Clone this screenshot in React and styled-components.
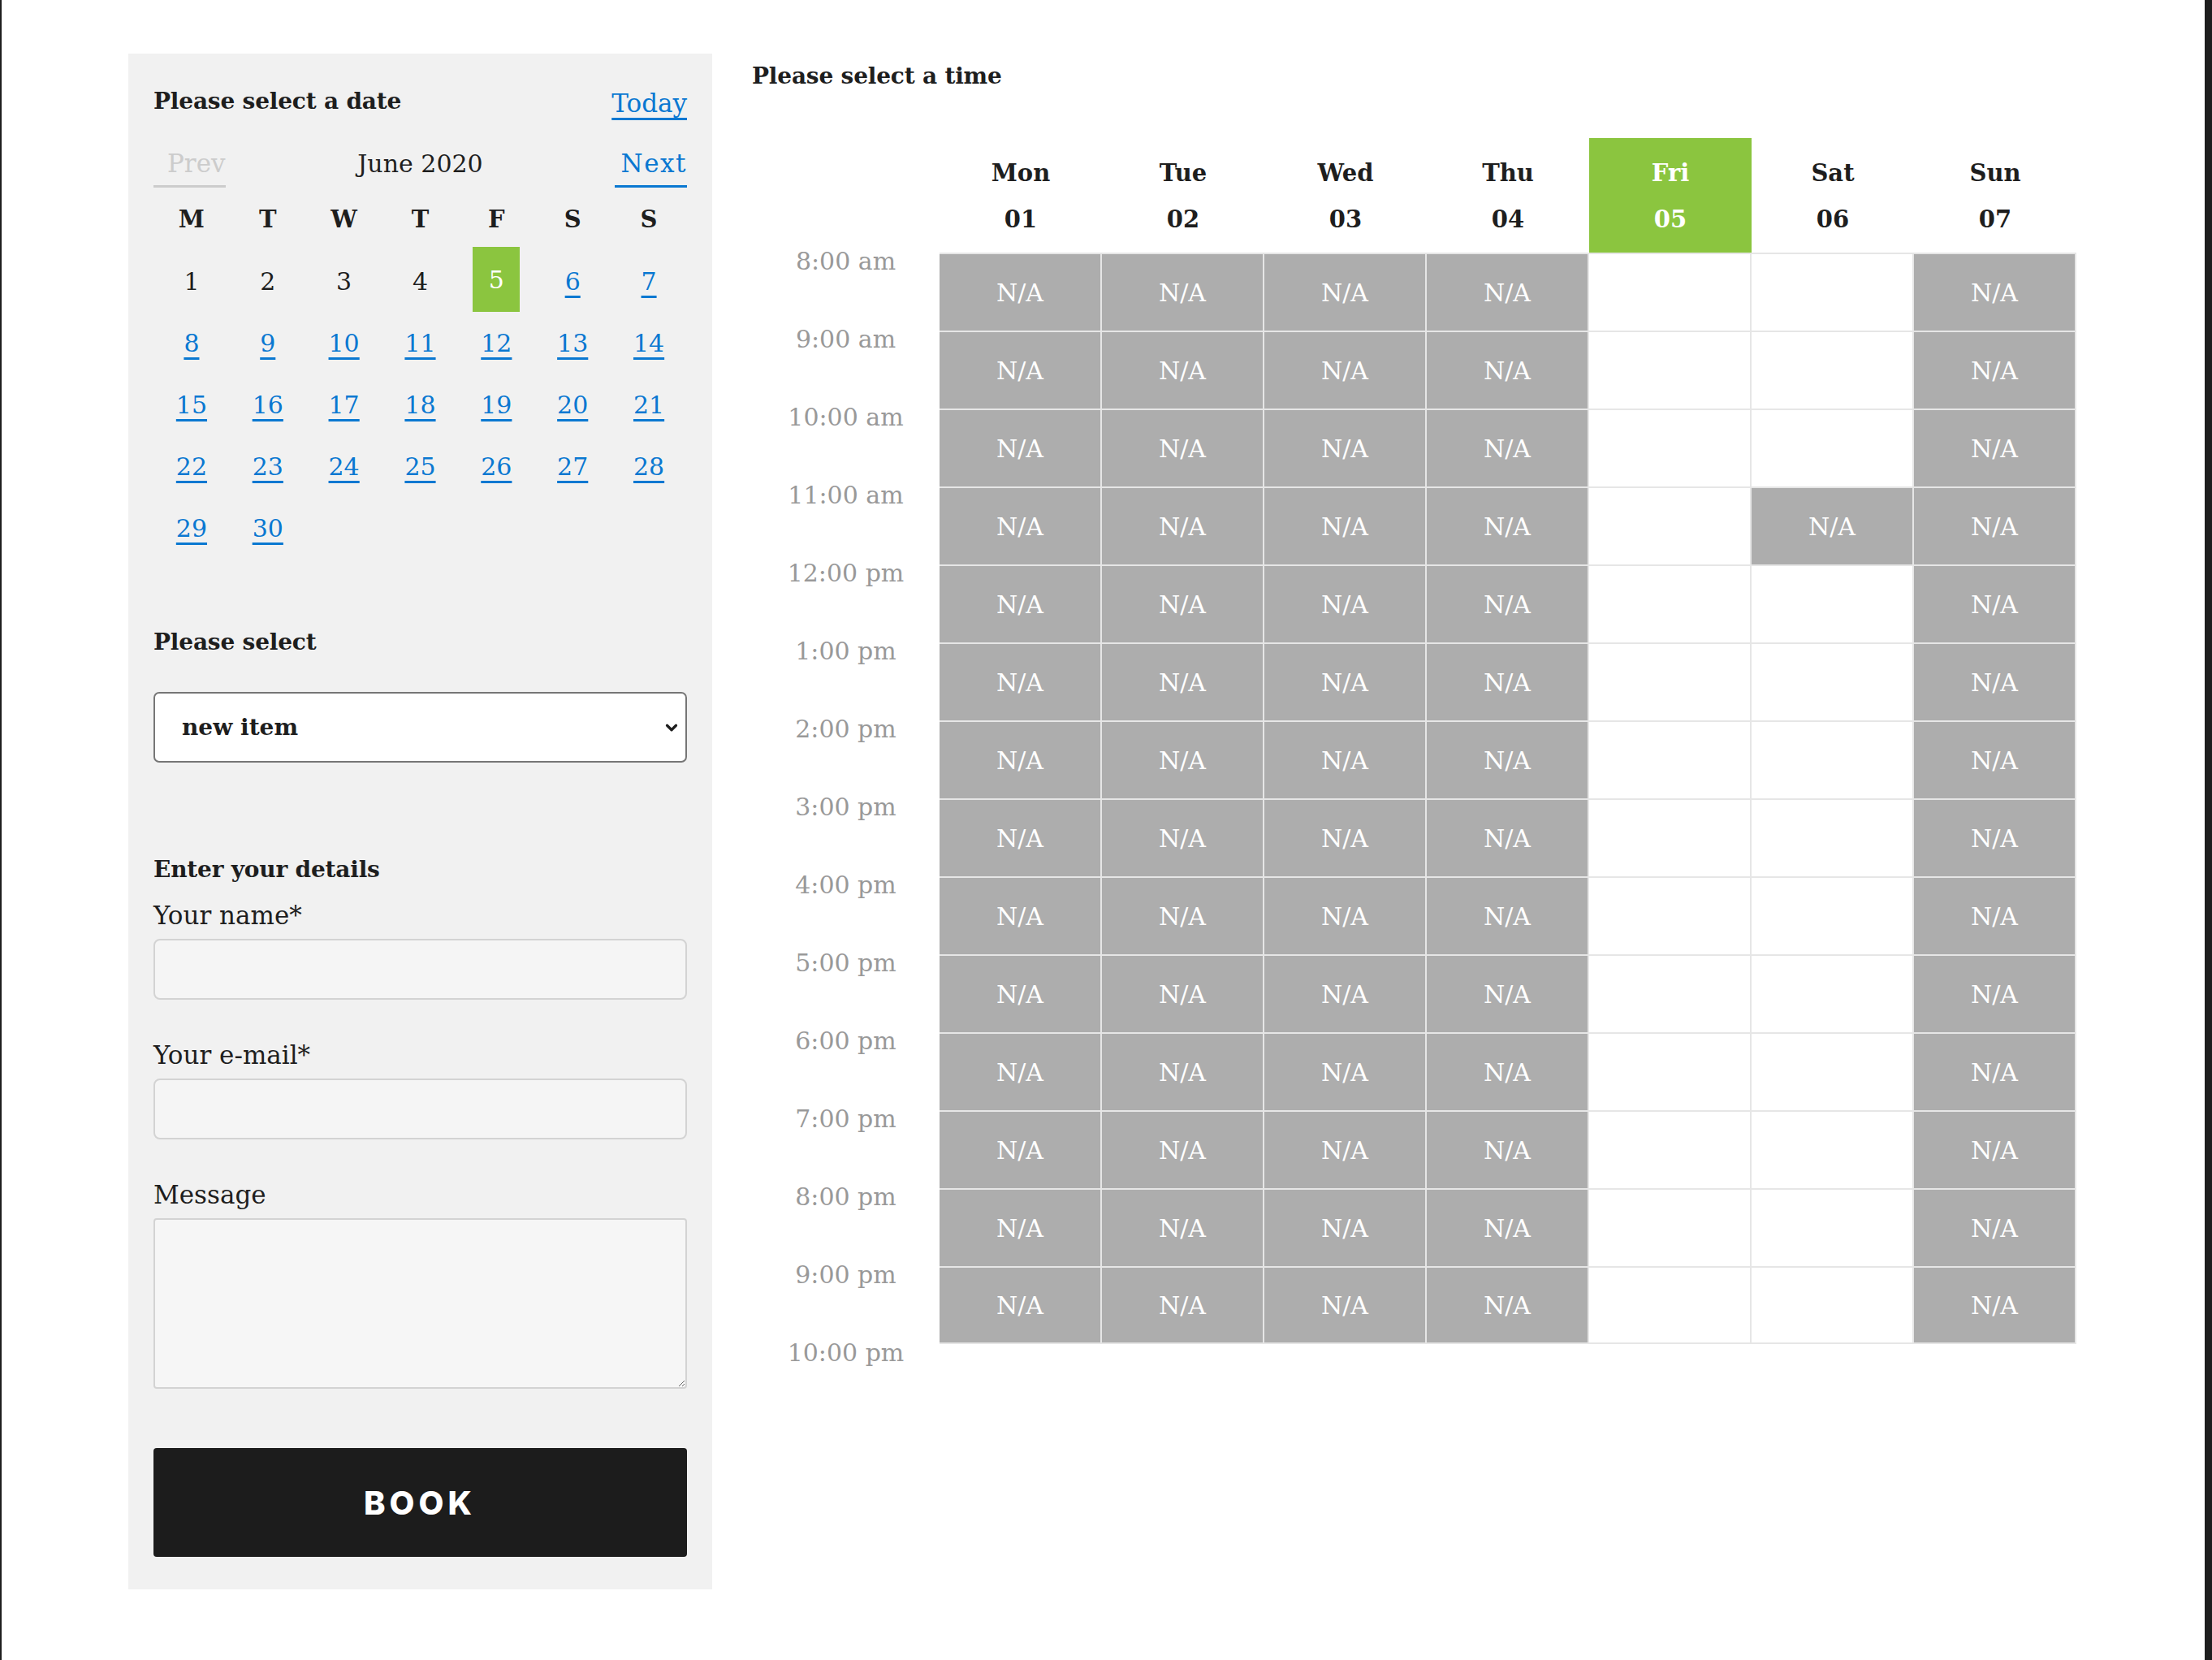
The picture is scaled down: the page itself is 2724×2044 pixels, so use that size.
import React from 'react';
import styled, { createGlobalStyle } from 'styled-components';
import { ChevronDown } from 'lucide-react';

const GlobalStyle = createGlobalStyle`
  html, body {
    margin: 0;
    padding: 0;
    background: #fff;
  }
  body {
    font-family: "DejaVu Serif", "Liberation Serif", serif;
    color: #1e1e1e;
  }
  * {
    box-sizing: border-box;
  }
`;

const BLUE = '#0a78d1';
const GREEN = '#8bc53f';

const Page = styled.div`
  min-height: 100vh;
  border-left: 2px solid #1e1e1e;
  border-right: 9px solid #1e1e1e;
  display: flex;
  align-items: flex-start;
  gap: 49px;
  padding: 66px 0 88px 156px;
`;

// ---- left panel ----
const Panel = styled.aside`
  width: 719px;
  background: #f1f1f1;
  padding: 39px 31px 40px;
  display: flex;
  flex-direction: column;
`;

const TopRow = styled.div`
  display: flex;
  justify-content: space-between;
  align-items: center;
  height: 40px;
`;

const Heading = styled.h3`
  margin: ${p => p.$top || 0}px 0 0;
  font-size: 28px;
  line-height: 40px;
  font-weight: 700;
  letter-spacing: -0.2px;
`;

const TextLink = styled.a`
  color: ${BLUE};
  font-size: 31px;
  line-height: 40px;
  margin-top: 4px;
  text-decoration: underline;
  text-decoration-thickness: 3px;
  text-underline-offset: 7px;
  cursor: pointer;
`;

const NavRow = styled.div`
  margin-top: 35px;
  display: grid;
  grid-template-columns: 1fr auto 1fr;
  align-items: end;
`;

const NavLink = styled.a`
  justify-self: ${p => (p.$end ? 'end' : 'start')};
  font-size: 31px;
  line-height: 42px;
  padding: 0 0 6px ${p => (p.$end ? 8 : 17)}px;
  letter-spacing: ${p => (p.$end ? '1.5px' : '0')};
  color: ${p => (p.$disabled ? '#cccccc' : BLUE)};
  border-bottom: 3px solid ${p => (p.$disabled ? '#cccccc' : BLUE)};
  text-decoration: none;
  cursor: pointer;
`;

const MonthLabel = styled.div`
  font-size: 30px;
  line-height: 42px;
  padding-bottom: 8px;
  text-align: center;
`;

const CalendarGrid = styled.div`
  display: grid;
  grid-template-columns: repeat(7, 1fr);
  grid-template-rows: 77px repeat(5, 76px);
`;

const WeekDay = styled.div`
  display: flex;
  align-items: center;
  justify-content: center;
  font-size: 29px;
  font-weight: 700;
`;

const DayCell = styled.div`
  display: flex;
  align-items: center;
  justify-content: center;
  font-size: 30px;
`;

const DayLink = styled.a`
  color: ${BLUE};
  text-decoration: underline;
  text-decoration-thickness: 3px;
  text-underline-offset: 7px;
  cursor: pointer;
`;

const SelectedDay = styled.span`
  width: 58px;
  height: 80px;
  margin-top: -4px;
  background: ${GREEN};
  color: #fff;
  display: flex;
  align-items: center;
  justify-content: center;
`;

const SelectWrap = styled.div`
  position: relative;
  margin-top: 41px;
  svg {
    position: absolute;
    right: 8px;
    top: 50%;
    transform: translateY(-50%);
    pointer-events: none;
  }
`;

const Select = styled.select`
  width: 100%;
  height: 87px;
  appearance: none;
  background: #fff;
  border: 2px solid #767676;
  border-radius: 7px;
  padding: 0 33px;
  font-family: inherit;
  font-size: 28px;
  font-weight: 700;
  color: #1e1e1e;
`;

const FieldLabel = styled.label`
  display: block;
  margin-top: ${p => p.$top}px;
  font-size: 31px;
  line-height: 40px;
`;

const TextInput = styled.input`
  display: block;
  width: 100%;
  height: 75px;
  margin-top: 9px;
  background: #f5f5f5;
  border: 2px solid #d3d3d3;
  border-radius: 8px;
  font-family: inherit;
  font-size: 30px;
  padding: 0 20px;
`;

const TextArea = styled.textarea`
  display: block;
  width: 100%;
  height: 210px;
  margin-top: 9px;
  background: #f6f6f6;
  border: 2px solid #d3d3d3;
  border-radius: 4px;
  font-family: inherit;
  font-size: 30px;
  padding: 16px 20px;
`;

const BookButton = styled.button`
  margin-top: 73px;
  height: 134px;
  width: 100%;
  border: none;
  border-radius: 4px;
  background: #1c1c1c;
  color: #fff;
  font-family: Inter, "Open Sans", sans-serif;
  font-weight: 800;
  font-size: 40px;
  letter-spacing: 5px;
  padding-left: 5px;
  cursor: pointer;
`;

// ---- schedule ----
const Schedule = styled.section`
  width: 1631px;
`;

const ScheduleTitle = styled.h3`
  margin: 0 0 48px;
  font-size: 28px;
  line-height: 56px;
  font-weight: 700;
  letter-spacing: -0.2px;
`;

const Row = styled.div`
  display: grid;
  grid-template-columns: 231px repeat(7, 200px);
  height: ${p => p.$h}px;
`;

const DayHead = styled.div`
  background: ${p => (p.$active ? GREEN : 'transparent')};
  color: ${p => (p.$active ? '#fff' : '#1e1e1e')};
  display: flex;
  flex-direction: column;
  align-items: center;
  justify-content: center;
  padding-top: 2px;
  font-size: 29px;
  font-weight: 700;
  line-height: 57px;
`;

const TimeCell = styled.div`
  color: #999;
  font-size: 30px;
  line-height: 30px;
  text-align: center;
  margin-top: -4px;
`;

const Slot = styled.div`
  border-top: 2px solid #e6e6e6;
  border-right: 2px solid #e6e6e6;
  border-bottom: ${p => (p.$last ? '2px solid #e6e6e6' : 'none')};
  background: ${p => (p.$na ? '#adadad' : '#fff')};
  color: #fff;
  font-size: 30px;
  display: flex;
  align-items: center;
  justify-content: center;
`;

const weekdays = ['M', 'T', 'W', 'T', 'F', 'S', 'S'];
const days = Array.from({ length: 30 }, (_, i) => i + 1);

const heads = [
  ['Mon', '01'], ['Tue', '02'], ['Wed', '03'], ['Thu', '04'],
  ['Fri', '05'], ['Sat', '06'], ['Sun', '07'],
];

const times = [
  '8:00 am', '9:00 am', '10:00 am', '11:00 am', '12:00 pm', '1:00 pm', '2:00 pm',
  '3:00 pm', '4:00 pm', '5:00 pm', '6:00 pm', '7:00 pm', '8:00 pm', '9:00 pm',
];

// which day columns are unavailable for a given row
const isNA = (row, col) => {
  if (col <= 3 || col === 6) return true;
  if (col === 5 && row === 3) return true;
  return false;
};

export default function App() {
  return (
    <>
      <GlobalStyle />
      <Page>
        <Panel>
          <TopRow>
            <Heading>Please select a date</Heading>
            <TextLink>Today</TextLink>
          </TopRow>
          <NavRow>
            <NavLink $disabled>Prev</NavLink>
            <MonthLabel>June 2020</MonthLabel>
            <NavLink $end>Next</NavLink>
          </NavRow>
          <CalendarGrid>
            {weekdays.map((d, i) => (
              <WeekDay key={'w' + i}>{d}</WeekDay>
            ))}
            {days.map(d => (
              <DayCell key={d}>
                {d < 5 && d}
                {d === 5 && <SelectedDay>5</SelectedDay>}
                {d > 5 && <DayLink>{d}</DayLink>}
              </DayCell>
            ))}
          </CalendarGrid>

          <Heading $top={83}>Please select</Heading>
          <SelectWrap>
            <Select defaultValue="new">
              <option value="new">new item</option>
            </Select>
            <ChevronDown size={22} strokeWidth={3.5} color="#1e1e1e" />
          </SelectWrap>

          <Heading $top={112}>Enter your details</Heading>
          <FieldLabel $top={16}>Your name*</FieldLabel>
          <TextInput type="text" />
          <FieldLabel $top={48}>Your e-mail*</FieldLabel>
          <TextInput type="email" />
          <FieldLabel $top={48}>Message</FieldLabel>
          <TextArea />
          <BookButton>BOOK</BookButton>
        </Panel>

        <Schedule>
          <ScheduleTitle>Please select a time</ScheduleTitle>
          <Row $h={141}>
            <div />
            {heads.map(([name, num], i) => (
              <DayHead key={name} $active={i === 4}>
                <span>{name}</span>
                <span>{num}</span>
              </DayHead>
            ))}
          </Row>
          {times.map((t, r) => (
            <Row key={t} $h={96}>
              <TimeCell>{t}</TimeCell>
              {heads.map((_, c) => (
                <Slot key={c} $na={isNA(r, c)} $last={r === times.length - 1}>
                  {isNA(r, c) ? 'N/A' : ''}
                </Slot>
              ))}
            </Row>
          ))}
          <Row $h={40}>
            <TimeCell>10:00 pm</TimeCell>
          </Row>
        </Schedule>
      </Page>
    </>
  );
}
